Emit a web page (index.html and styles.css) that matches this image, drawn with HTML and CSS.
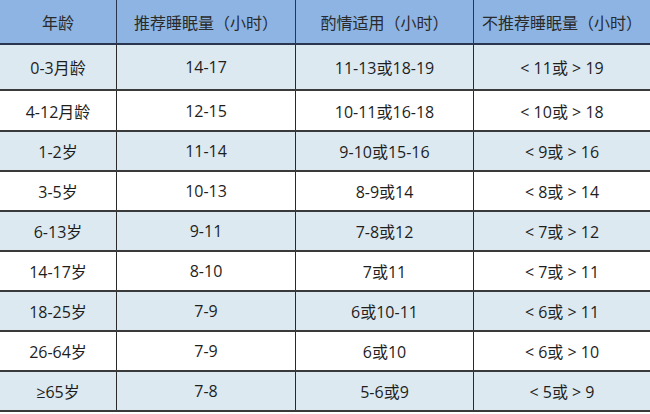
FILE: index.html
```html
<!DOCTYPE html>
<html lang="zh">
<head>
<meta charset="utf-8">
<link rel="stylesheet" href="styles.css">
</head>
<body>
<div class="table">
  <div class="row head">
    <div class="cell">年龄</div>
    <div class="cell">推荐睡眠量（小时）</div>
    <div class="cell">酌情适用（小时）</div>
    <div class="cell">不推荐睡眠量（小时）</div>
  </div>
  <div class="row light r1">
    <div class="cell">0-3月龄</div>
    <div class="cell">14-17</div>
    <div class="cell">11-13或18-19</div>
    <div class="cell">&lt; 11或 &gt; 19</div>
  </div>
  <div class="row r2">
    <div class="cell">4-12月龄</div>
    <div class="cell">12-15</div>
    <div class="cell">10-11或16-18</div>
    <div class="cell">&lt; 10或 &gt; 18</div>
  </div>
  <div class="row light">
    <div class="cell">1-2岁</div>
    <div class="cell">11-14</div>
    <div class="cell">9-10或15-16</div>
    <div class="cell">&lt; 9或 &gt; 16</div>
  </div>
  <div class="row">
    <div class="cell">3-5岁</div>
    <div class="cell">10-13</div>
    <div class="cell">8-9或14</div>
    <div class="cell">&lt; 8或 &gt; 14</div>
  </div>
  <div class="row light">
    <div class="cell">6-13岁</div>
    <div class="cell">9-11</div>
    <div class="cell">7-8或12</div>
    <div class="cell">&lt; 7或 &gt; 12</div>
  </div>
  <div class="row">
    <div class="cell">14-17岁</div>
    <div class="cell">8-10</div>
    <div class="cell">7或11</div>
    <div class="cell">&lt; 7或 &gt; 11</div>
  </div>
  <div class="row light">
    <div class="cell">18-25岁</div>
    <div class="cell">7-9</div>
    <div class="cell">6或10-11</div>
    <div class="cell">&lt; 6或 &gt; 11</div>
  </div>
  <div class="row">
    <div class="cell">26-64岁</div>
    <div class="cell">7-9</div>
    <div class="cell">6或10</div>
    <div class="cell">&lt; 6或 &gt; 10</div>
  </div>
  <div class="row light">
    <div class="cell">≥65岁</div>
    <div class="cell">7-8</div>
    <div class="cell">5-6或9</div>
    <div class="cell">&lt; 5或 &gt; 9</div>
  </div>
</div>
</body>
</html>
```
FILE: styles.css
```css
html, body {
  margin: 0;
  padding: 0;
  background: #ffffff;
}
body {
  width: 650px;
  height: 414px;
  overflow: hidden;
  font-family: "Open Sans", "Noto Sans CJK SC", sans-serif;
  font-size: 16px;
  color: #1e1e1e;
}
.table {
  display: flex;
  flex-direction: column;
  width: 650px;
}
.row {
  display: grid;
  grid-template-columns: 116px 179px 178px 1fr;
  height: 40px;
  box-sizing: border-box;
  border-bottom: 2px solid #3a3a3a;
  background: #ffffff;
}
.row.light {
  background: #dce9f1;
}
.row.head {
  height: 45px;
  background: #8db4e2;
  border-bottom-color: #2a3550;
  color: #2a2a2a;
}
.row.r1 {
  height: 46px;
}
.row.r2 {
  height: 41px;
}
.cell {
  display: flex;
  align-items: center;
  justify-content: center;
  white-space: pre;
}
.cell + .cell {
  border-left: 1px solid #2a2a2a;
}
.head .cell + .cell {
  border-left-color: #2a3550;
}
```
